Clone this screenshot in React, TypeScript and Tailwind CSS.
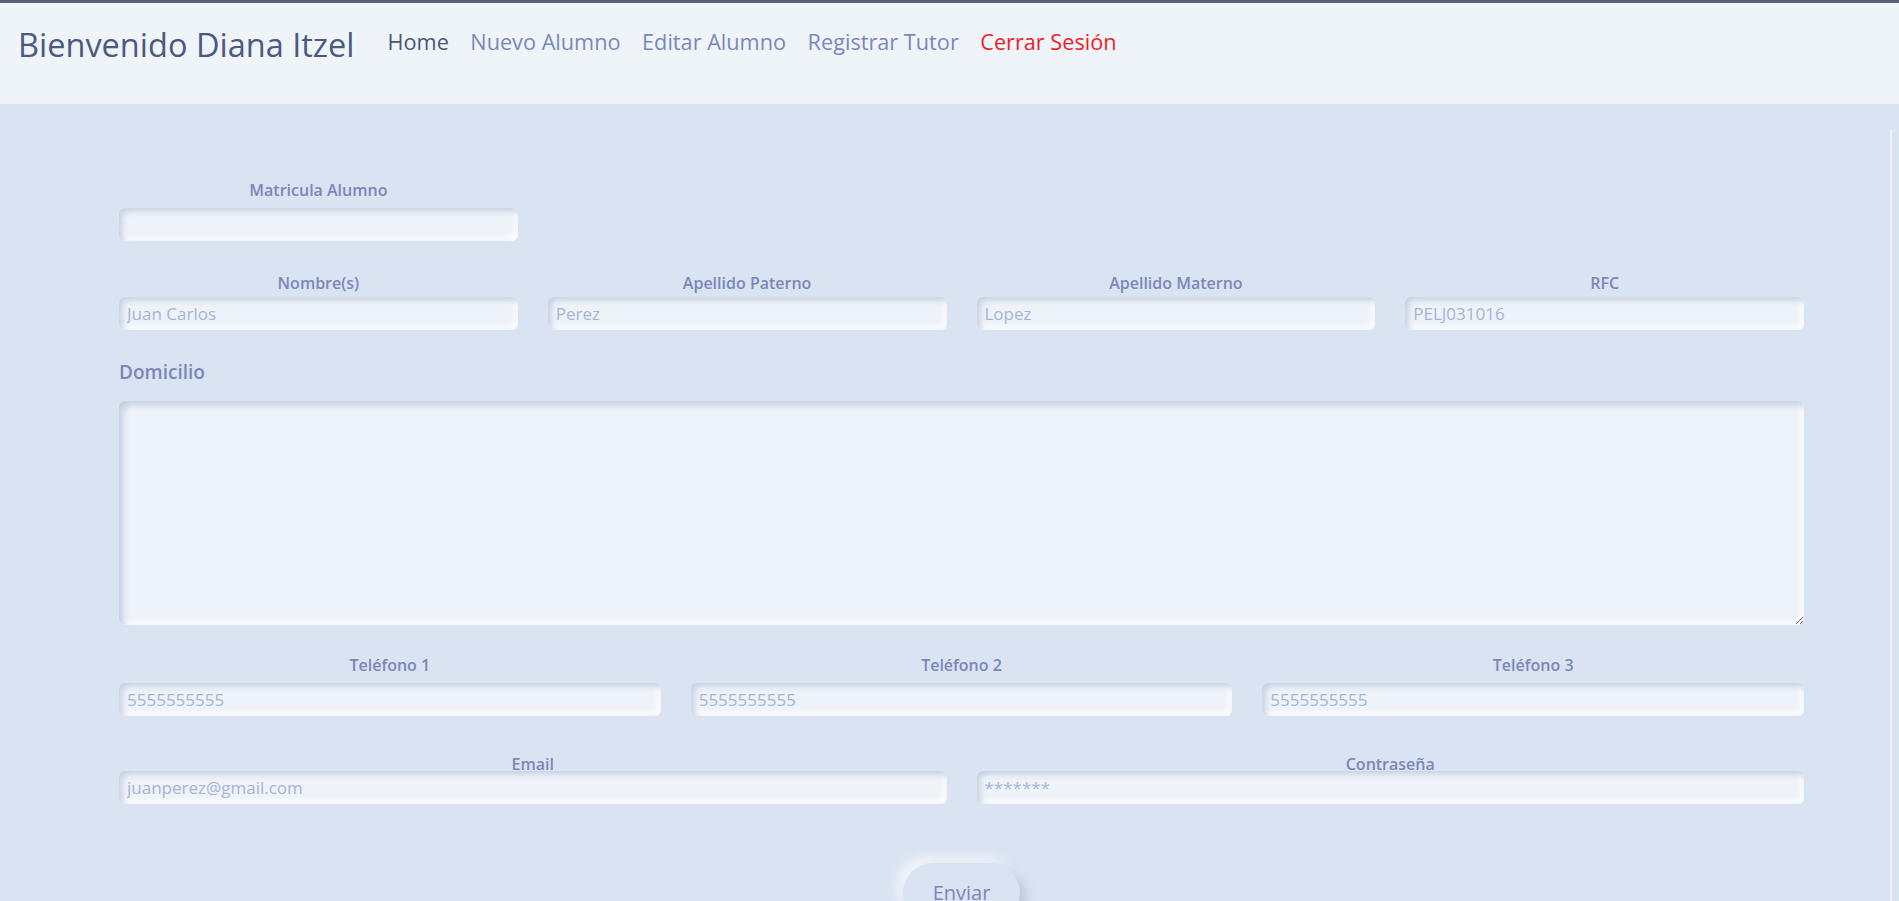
import React from "react";

// Formulario de alta de alumno: cabecera con navegación y campos con sombra interior.

const NAV = [
  { label: "Home", cls: "text-[#4b5679]" },
  { label: "Nuevo Alumno", cls: "text-[#7c88ba]" },
  { label: "Editar Alumno", cls: "text-[#7c88ba]" },
  { label: "Registrar Tutor", cls: "text-[#7c88ba]" },
  { label: "Cerrar Sesión", cls: "text-[#ee1c25]" },
];

const inputCls =
  "relative block w-full h-[33px] rounded-[6px] bg-[#eef3f9] px-[8px] text-[17px] text-[#5a6790] placeholder:text-[#a8b4d6] outline-none shadow-[inset_3px_3px_6px_#c3cde0,inset_-3px_-3px_6px_#ffffff]";

const labelCls = "block text-center text-[16px] leading-[20px] font-[550] text-[#7b87b9]";

function Field({ label, placeholder, type = "text", gap = "mb-[4px]" }: { label: string; placeholder?: string; type?: string; gap?: string }) {
  return (
    <div>
      <label className={`${labelCls} ${gap}`}>{label}</label>
      <input type={type} placeholder={placeholder} className={inputCls} />
    </div>
  );
}

export default function App() {
  return (
    <div className="min-h-screen bg-[#dae3f1] font-['Open_Sans','Noto_Sans',sans-serif]">
      <header className="h-[104px] border-t-[3px] border-[#58627a] bg-[#eff4f9] flex items-start px-[18px] pt-[23px]">
        <span className="text-[32.5px] leading-[38px] text-[#4a5a80]">Bienvenido Diana Itzel</span>
        <nav className="ml-[33px] flex gap-[21.5px] pt-[2px]">
          {NAV.map((n) => (
            <a key={n.label} className={`text-[21.7px] leading-[28px] ${n.cls}`}>
              {n.label}
            </a>
          ))}
        </nav>
      </header>

      <main className="relative">
        <div className="absolute left-[1890px] top-[25px] bottom-0 w-[2px] bg-[#eff3f9]" />
        <form className="pl-[119px] pr-[95px] pt-[76px] pb-[40px]">
          <div className="grid grid-cols-4 gap-x-[30px]">
            <Field label="Matricula Alumno" gap="mb-[8px]" />
          </div>

          <div className="grid grid-cols-4 gap-x-[30px] mt-[32px]">
            <Field label="Nombre(s)" placeholder="Juan Carlos" />
            <Field label="Apellido Paterno" placeholder="Perez" />
            <Field label="Apellido Materno" placeholder="Lopez" />
            <Field label="RFC" placeholder="PELJ031016" />
          </div>

          <div className="mt-[30px]">
            <label className="block text-[19px] leading-[24px] font-[550] text-[#7b87b9] mb-[17px]">Domicilio</label>
            <textarea className="block w-full h-[224px] rounded-[6px] bg-[#eef3f9] p-[8px] outline-none shadow-[inset_4px_4px_7px_#c3cde0,inset_-3px_-3px_6px_#ffffff]" />
          </div>

          <div className="grid grid-cols-3 gap-x-[30px] mt-[30px]">
            <Field label="Teléfono 1" placeholder="5555555555" gap="mb-[8px]" />
            <Field label="Teléfono 2" placeholder="5555555555" gap="mb-[8px]" />
            <Field label="Teléfono 3" placeholder="5555555555" gap="mb-[8px]" />
          </div>

          <div className="grid grid-cols-2 gap-x-[30px] mt-[38px]">
            <Field label="Email" placeholder="juanperez@gmail.com" gap="-mb-[3px]" />
            <Field label="Contraseña" placeholder="*******" type="password" gap="-mb-[3px]" />
          </div>

          <div className="flex justify-center mt-[59px]">
            <button
              type="button"
              className="h-[60px] px-[30px] rounded-[30px] bg-[#dae3f1] text-[20px] font-medium text-[#7b87b9] shadow-[6px_6px_12px_#bcc6d8,-6px_-6px_12px_#f2f6fb]"
            >
              Enviar
            </button>
          </div>
        </form>
      </main>
    </div>
  );
}
